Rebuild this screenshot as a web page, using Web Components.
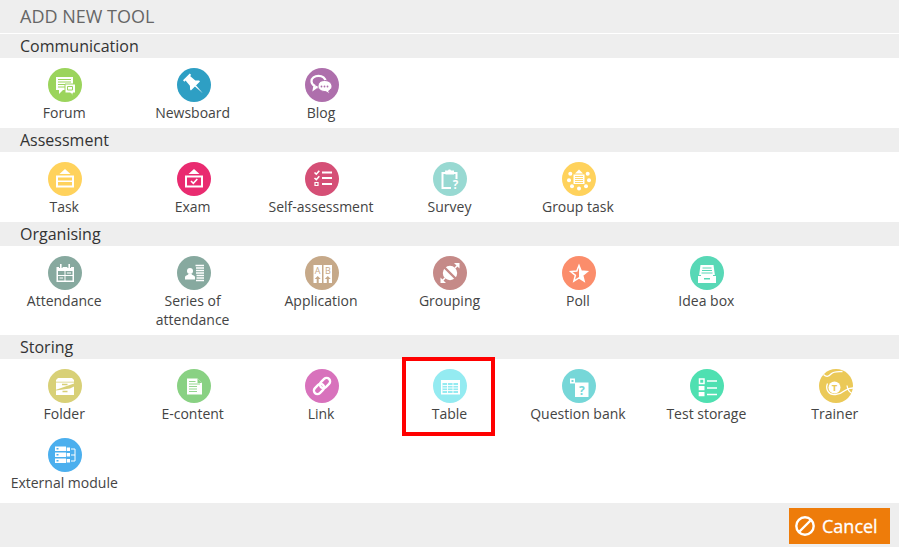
<!DOCTYPE html>
<html lang="en">
<head>
<meta charset="utf-8">
<title>Add new tool</title>
<style>
  html, body { margin: 0; padding: 0; background: #eee; }
  body { font-family: "Open Sans", "Liberation Sans", sans-serif; overflow: hidden; }
</style>
</head>
<body>
<tool-dialog heading="ADD NEW TOOL">
  <tool-section heading="Communication">
    <tool-tile label="Forum" icon="forum" color="#9bd45c"></tool-tile>
    <tool-tile label="Newsboard" icon="pin" color="#2e9fc4"></tool-tile>
    <tool-tile label="Blog" icon="blog" color="#ae6fac"></tool-tile>
  </tool-section>
  <tool-section heading="Assessment">
    <tool-tile label="Task" icon="task" color="#ffd25c"></tool-tile>
    <tool-tile label="Exam" icon="exam" color="#e92b70"></tool-tile>
    <tool-tile label="Self-assessment" icon="checklist" color="#d54f76"></tool-tile>
    <tool-tile label="Survey" icon="survey" color="#98d9d2"></tool-tile>
    <tool-tile label="Group task" icon="group" color="#ffd25c"></tool-tile>
  </tool-section>
  <tool-section heading="Organising">
    <tool-tile label="Attendance" icon="calendar" color="#87a99f"></tool-tile>
    <tool-tile label="Series of attendance" icon="series" color="#87a99f"></tool-tile>
    <tool-tile label="Application" icon="application" color="#c6a989"></tool-tile>
    <tool-tile label="Grouping" icon="grouping" color="#c58a88"></tool-tile>
    <tool-tile label="Poll" icon="poll" color="#fb8d6b"></tool-tile>
    <tool-tile label="Idea box" icon="ideabox" color="#58d8b6"></tool-tile>
  </tool-section>
  <tool-section heading="Storing" extra>
    <tool-tile label="Folder" icon="folder" color="#d8d077"></tool-tile>
    <tool-tile label="E-content" icon="econtent" color="#89d183"></tool-tile>
    <tool-tile label="Link" icon="link" color="#d872bc"></tool-tile>
    <tool-tile label="Table" icon="table" color="#94ebf1" highlighted></tool-tile>
    <tool-tile label="Question bank" icon="qbank" color="#76d7d8"></tool-tile>
    <tool-tile label="Test storage" icon="storage" color="#4fe0b1"></tool-tile>
    <tool-tile label="Trainer" icon="trainer" color="#ebc958"></tool-tile>
    <tool-tile label="External module" icon="external" color="#4bafee"></tool-tile>
  </tool-section>
  <cancel-button slot="footer">Cancel</cancel-button>
</tool-dialog>

<script>
// icons are drawn on the 34x34 circle, c = circle colour for the cut-outs
const ICONS = {
  forum: c => `
    <path fill="#fff" d="M8 9h17v13h-10l-4 4v-4H8z"/>
    <path stroke="${c}" stroke-width="1" d="M10 11.500h13M10 14h13M10 16.500h7M10 19h7"/>
    <path fill="#fff" stroke="${c}" stroke-width="1" d="M17 16h10.500v9H25v2.500L22.500 25H17z"/>
    <path fill="none" stroke="${c}" stroke-width="1" d="M19.500 18.500h5v3.500h-5z"/>`,
  pin: () => `
    <g transform="translate(3.500 3) scale(.8) rotate(-45 15.500 15.500)" fill="#fff">
      <path d="M9.500 4h12v2.500h-2l.8 8.500 3.200 3.500V20h-16v-1.500l3.200-3.500.8-8.500h-2z"/>
      <path d="M14.500 19.500h2L15.500 33z"/>
    </g>`,
  blog: c => `
    <path fill="none" stroke="#fff" stroke-width="2.200" d="M13.500 7.800c4 0 7 2.500 7 5.700s-3 5.700-7 5.700c-.7 0-1.300 0-1.900-.2l-2.700 2 .6-3.300c-1.800-1-3-2.600-3-4.500 0-3 3-5.400 7-5.400z"/>
    <path fill="#fff" stroke="${c}" stroke-width="1" d="M19.500 12.500c4.300 0 7.500 2.500 7.500 5.700 0 2-1.300 3.700-3.300 4.700l1 3.100-4-2.400c-4.300 0-7.700-2.300-7.700-5.400s2.300-5.700 6.500-5.700z"/>
    <g fill="${c}"><circle cx="16.500" cy="18.500" r=".9"/><circle cx="19.500" cy="18.500" r=".9"/><circle cx="22.500" cy="18.500" r=".9"/></g>`,
  task: c => `
    <path fill="#fff" d="M17 7l5.500 5h-11zM8 13.500h18V25.500H8z"/>
    <path fill="${c}" d="M10 15.500h14v3H10zM10 20h14v3.500H10z"/>`,
  exam: c => `
    <path fill="#fff" d="M17 7l5.500 5h-11zM8 13.500h18V25.500H8z"/>
    <path fill="${c}" d="M10 15.500h14v8H10z"/>
    <path fill="none" stroke="#fff" stroke-width="1.600" d="M14 19l2.300 2.300 4-4.300"/>`,
  checklist: () => `
    <g fill="none" stroke="#fff">
      <path stroke-width="1.600" d="M9.500 10.500l1.800 1.700 3-3.500M9.500 16l1.800 1.700 3-3.500"/>
      <path stroke-width="1.800" d="M17 10.500h10M17 16h10M17 22h10"/>
      <path stroke-width="1.200" d="M10 20.500h3v3h-3z"/>
    </g>`,
  survey: c => `
    <path fill="none" stroke="#fff" stroke-width="2" d="M9.500 11h14v15h-14z"/>
    <path fill="#fff" d="M12 8.500h3l.7-1h1.600l.7 1h3v4h-8.500z"/>
    <path fill="${c}" d="M18 17h8v11h-8z"/>
    <text x="22.500" y="26.500" text-anchor="middle" font-size="11.500" font-weight="700" fill="#fff">?</text>`,
  group: c => `
    <g fill="#fff">
      <circle cx="8.300" cy="11.700" r="2"/><circle cx="7" cy="18.300" r="2"/><circle cx="10" cy="24.300" r="2"/>
      <circle cx="17" cy="26.500" r="2"/><circle cx="24" cy="24.300" r="2"/><circle cx="27" cy="18.300" r="2"/><circle cx="25.700" cy="11.700" r="2"/>
      <path d="M17 7.500l4 4h-8zM11.500 12.500h11V22h-11z"/>
    </g>
    <path stroke="${c}" stroke-width=".9" d="M13 14.500h8M13 16.500h8M13 18.500h8M13 20.500h8"/>`,
  calendar: c => `
    <path fill="#fff" d="M8.500 11h17.500v15H8.500z"/>
    <path fill="${c}" d="M10 15h6.500v4H10zM17.500 15h7v4h-7zM10 20h6.500v4.500H10zM17.500 20h7v4.500h-7z"/>
    <path fill="#fff" d="M11.500 21.500h3.500v1h-3.500zM19 16.500h4v1h-4z"/>
    <path stroke="${c}" stroke-width="3.600" d="M12.800 7v5M21.200 7v5"/>
    <path stroke="#fff" stroke-width="1.600" d="M12.800 8v4M21.200 8v4"/>`,
  series: () => `
    <circle cx="13" cy="15" r="3" fill="#fff"/>
    <path fill="#fff" d="M8 23.500v-2.800c1-1.400 3-1.700 3.500-2.700h3c.5 1 2.500 1.300 3.500 2.700v2.800z"/>
    <path stroke="#fff" stroke-width="1.500" d="M18.500 9.500h8.500M19 12h8M19 14.500h8M19 17h8M19.500 19.500h7.500M19.500 22h7.500M19 24.500h8"/>`,
  application: c => `
    <path fill="#fff" d="M8.500 9h8.500v18H8.500zM18.500 9h8.500v18h-8.500z"/>
    <g font-size="9" text-anchor="middle" fill="${c}">
      <text x="12.700" y="18">A</text><text x="22.800" y="18">B</text>
    </g>
    <path fill="${c}" d="M12.700 20l3 3h-2v4h-2v-4h-2zM22.800 20l3 3h-2v4h-2v-4h-2z"/>`,
  grouping: c => `
    <circle cx="17" cy="17" r="7.200" fill="#fff"/>
    <path stroke="${c}" stroke-width="2.400" d="M10 10l14 14"/>
    <path stroke="#fff" stroke-width="1.500" fill="none" d="M22 12l3-3M12 22l-3 3"/>
    <path fill="#fff" d="M21 7h5.500v5.500zM7.500 21.500L13 27H7.500z"/>`,
  poll: () => `
    <path fill="none" stroke="#fff" stroke-width="1.500" stroke-linejoin="miter" d="M17 9.500l2.200 5.600 6 .4-4.600 3.800 1.500 5.800-5.100-3.200-5.100 3.200 1.500-5.800-4.600-3.800 6-.4z"/>
    <path fill="#fff" d="M17 9.500l2.200 5.600 6 .4-4.600 3.800 1.500 5.800-5.100-3.200z"/>`,
  ideabox: c => `
    <path fill="#fff" d="M10.500 9h13L25 20H9zM8 19.500h18V27H8z"/>
    <path stroke="${c}" stroke-width="1" d="M12.500 12h9M12 14.500h10M11.500 17h11M8 19.500h3M23 19.500h3"/>
    <path fill="${c}" d="M14 22h6v1.500h-6z"/>`,
  folder: c => `
    <path fill="#fff" d="M10 9h14l2 2v15H8V11z"/>
    <path fill="${c}" d="M8 12.700h18v.9H8zM14 14.800h5.500v1.500H14zM14.500 21.800h5v1.500h-5z"/>
    <path fill="${c}" d="M8 20.800L26 14.400v3L22 19.500 8 21.500z"/>`,
  econtent: c => `
    <path fill="#fff" d="M10 9.500h10.500l4.500 4.500v11.500H10z"/>
    <path fill="${c}" d="M20.500 9.500l4.500 4.500h-4.500z"/>
    <path stroke="${c}" stroke-width=".9" d="M12 12.500h6.500M12 15h11M12 17.500h8M12 20h8M12 22.500h8"/>`,
  link: () => `
    <g fill="none" stroke="#fff" stroke-width="2.400" transform="rotate(-45 17 17)">
      <rect x="7" y="13.500" width="11.500" height="7" rx="3.500"/>
      <rect x="15.500" y="13.500" width="11.500" height="7" rx="3.500"/>
    </g>`,
  table: c => `
    <path fill="#fff" d="M8 11h19v14.500H8z"/>
    <path fill="${c}" d="M9.500 14h15.500v10H9.500z"/>
    <path stroke="#fff" stroke-width=".9" d="M9.500 16.500h15.500M9.500 19h15.500M9.500 21.500h15.500M14.500 14v10M20 14v10"/>`,
  qbank: c => `
    <path fill="#fff" d="M8 9.500h5v5H8zM13 13.500h13.500V28H13z"/>
    <path fill="${c}" d="M9.500 11h2v2h-2z"/>
    <text x="19.800" y="25.500" text-anchor="middle" font-size="12" font-weight="700" fill="${c}">?</text>`,
  storage: () => `
    <path fill="none" stroke="#fff" stroke-width="1.500" d="M9.500 10h4.500v4.500H9.500z"/>
    <path fill="#fff" d="M8.700 17h5.800v4.300H8.700zM8.700 23h5.800v4.300H8.700z"/>
    <path stroke="#fff" stroke-width="1.400" d="M17 12h10M17 19h10M17 25.500h10"/>`,
  trainer: c => `
    <path fill="none" stroke="#fff" stroke-width="1.300" d="M4.500 5.500C7 8 9.500 8 12 5c3-3 8-2 11.500-2.500M8.500 14.500c-2.500 6 1.500 12 8 11 4-.5 6.500-1.500 9.500-4 2.500-2 5-2.500 8-2.500M28 16.500c.5 3.500 2 6.500 5 8"/>
    <circle cx="15.500" cy="18.500" r="6" fill="#fff"/>
    <text x="15.500" y="22" text-anchor="middle" font-size="9.500" font-weight="700" fill="${c}">T</text>`,
  external: c => `
    <path fill="#fff" d="M7 8.500h11V13H7zM7 14.500h11V19H7zM7 20.500h11V25H7zM18.700 9.500H22V13h-3.300zM18.700 15H22v3.500h-3.300zM18.700 21H22v3.500h-3.300z"/>
    <path fill="${c}" d="M8.500 10h2v1.500h-2zM8.500 16h2v1.500h-2zM8.500 22h2v1.500h-2z"/>
    <path fill="none" stroke="#fff" d="M23 11h4v12h-4M23 17h4"/>`
}

class ToolTile extends HTMLElement {
  constructor() {
    super()
    this.attachShadow({ mode: 'open' })
  }

  connectedCallback() {
    const color = this.getAttribute('color')
    const icon = ICONS[this.getAttribute('icon')]
    this.shadowRoot.innerHTML = `
      <style>
        :host { display: block; position: relative; text-align: center; padding: 10px 0 5px; font-size: 14px; line-height: 19px; color: #444; }
        svg { display: block; margin: 0 0 1px calc(50% - 16px); }
        .label { padding: 0 10px; }
        .mark { position: absolute; left: 17px; top: -2px; width: 85px; height: 71px; border: 4px solid #f00; }
      </style>
      <svg width="34" height="34" viewBox="0 0 34 34" aria-hidden="true">
        <circle cx="17" cy="17" r="17" fill="${color}"/>
        ${icon ? icon(color) : ''}
      </svg>
      <div class="label">${this.getAttribute('label')}</div>
      ${this.hasAttribute('highlighted') ? '<div class="mark"></div>' : ''}
    `
  }
}

class ToolSection extends HTMLElement {
  constructor() {
    super()
    this.attachShadow({ mode: 'open' })
  }

  connectedCallback() {
    this.shadowRoot.innerHTML = `
      <style>
        :host { display: block; }
        h3 { margin: 0; height: 24px; padding-left: 20px; background: #eee; font-size: 16px; font-weight: 400; line-height: 24px; color: #333; }
        .grid { display: grid; grid-template-columns: repeat(7, 1fr); background: #fff; padding-bottom: 1px; }
        :host([extra]) .grid { padding-bottom: 6px; }
      </style>
      <h3>${this.getAttribute('heading')}</h3>
      <div class="grid"><slot></slot></div>
    `
  }
}

class CancelButton extends HTMLElement {
  constructor() {
    super()
    this.attachShadow({ mode: 'open' })
  }

  connectedCallback() {
    this.shadowRoot.innerHTML = `
      <style>
        :host { display: block; }
        button { display: flex; align-items: center; gap: 7px; width: 101px; height: 36px; padding: 0 0 0 6px; border: 0; background: #ee7c0a; color: #fff; font: 400 18px/36px "Open Sans", "Liberation Sans", sans-serif; -webkit-text-stroke: .3px #fff; cursor: pointer; }
        svg { flex: none; }
      </style>
      <button type="button">
        <svg width="20" height="20" viewBox="0 0 20 20" aria-hidden="true">
          <circle cx="10" cy="10" r="8.700" fill="none" stroke="#fff" stroke-width="2.400"/>
          <path d="M4.500 15.500l11-11" stroke="#fff" stroke-width="2.400"/>
        </svg>
        <slot></slot>
      </button>
    `
  }
}

class ToolDialog extends HTMLElement {
  constructor() {
    super()
    this.attachShadow({ mode: 'open' })
  }

  connectedCallback() {
    this.shadowRoot.innerHTML = `
      <style>
        :host { display: block; background: #eee; }
        header { height: 33px; padding-left: 20px; border-bottom: 1px solid #fff; font-size: 18px; line-height: 33px; color: #666; }
        footer { display: flex; justify-content: flex-end; height: 39px; padding: 5px 9px 0 0; }
      </style>
      <header>${this.getAttribute('heading')}</header>
      <slot></slot>
      <footer><slot name="footer"></slot></footer>
    `
  }
}

customElements.define('tool-tile', ToolTile)
customElements.define('tool-section', ToolSection)
customElements.define('cancel-button', CancelButton)
customElements.define('tool-dialog', ToolDialog)
</script>
</body>
</html>
